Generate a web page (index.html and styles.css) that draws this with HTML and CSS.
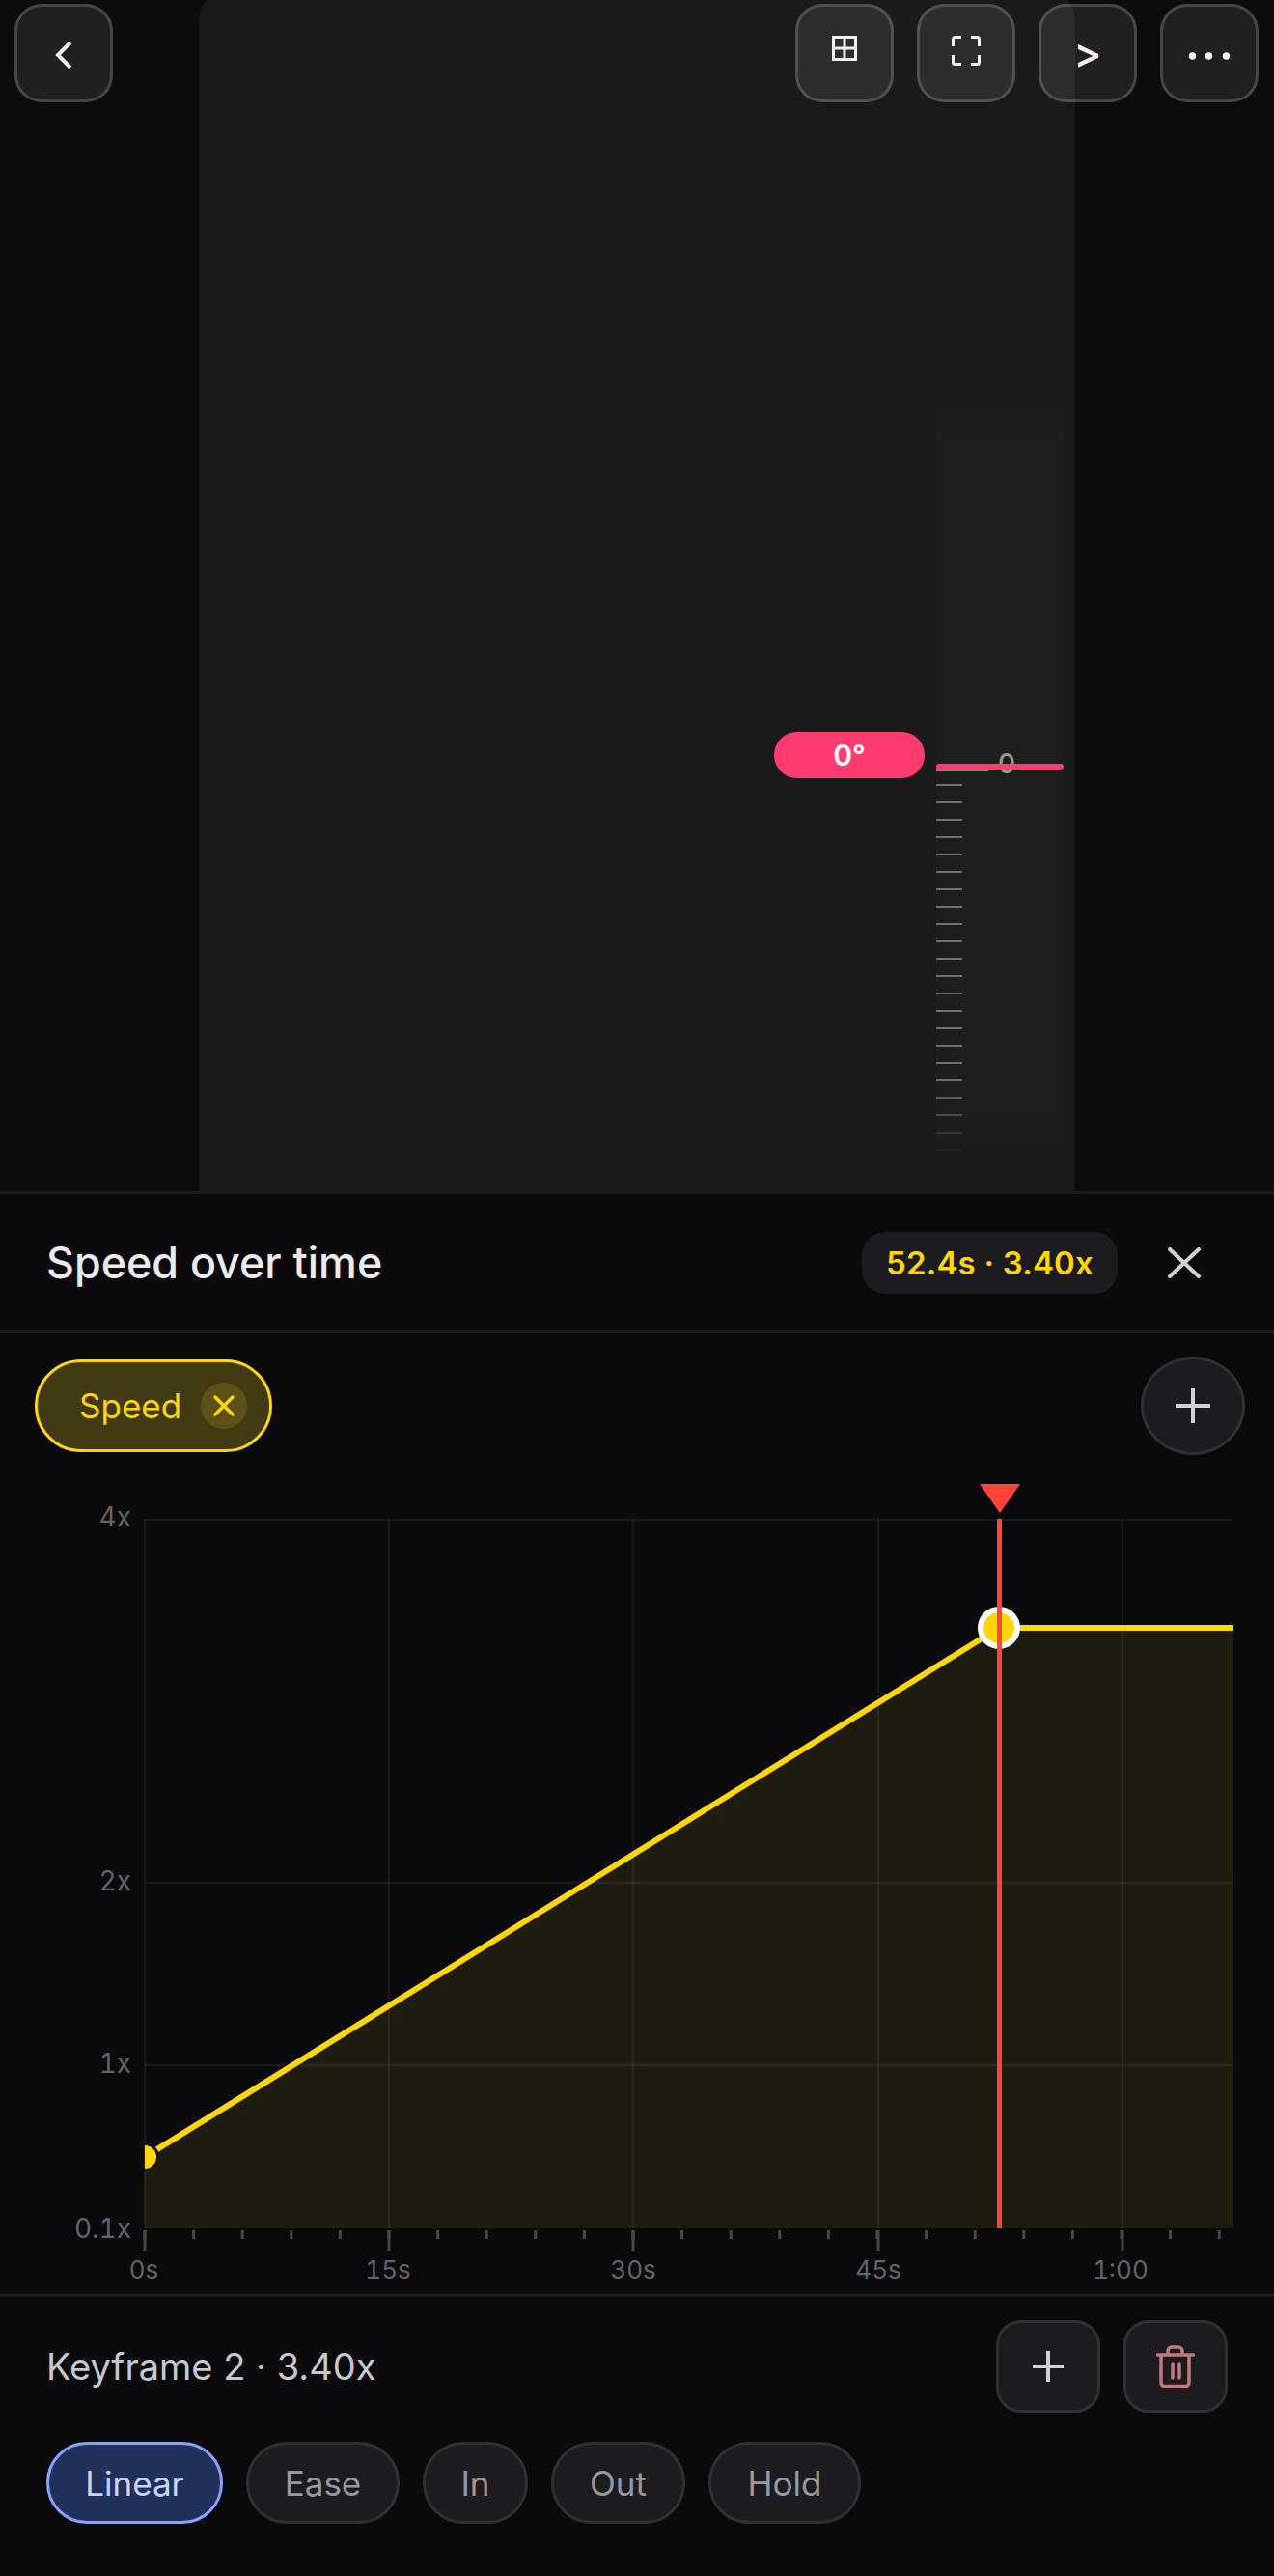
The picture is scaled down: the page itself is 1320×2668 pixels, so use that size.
FILE: index.html
```html
<!DOCTYPE html>
<html lang="en">
<head>
    <meta charset="UTF-8">
    <title>Speed over time</title>
    <link rel="stylesheet" href="styles.css">
</head>
<body>
    <section class="preview">
        <div class="canvas">
            <div class="ruler">
                <div class="rulerMajor"></div>
                <div class="rulerTicks"></div>
                <span class="rulerZero">0</span>
                <div class="rulerLine"></div>
                <div class="angleBadge">0°</div>
            </div>
        </div>
        <div class="topBar">
            <button class="topBtn">
                <svg width="20" height="36" viewBox="0 0 20 36"><path d="M17 7 4 20l13 13" class="topIcon"/></svg>
            </button>
            <div class="topGroup">
                <button class="topBtn">
                    <svg width="28" height="36" viewBox="0 0 28 36"><path d="M2.500 1.500h23v23h-23zM14 1.500v23M2.500 13h23" class="topIcon thin"/></svg>
                </button>
                <button class="topBtn">
                    <svg width="30" height="36" viewBox="0 0 30 36"><path d="M1.500 11V3.500a2 2 0 0 1 2-2H10M20 1.500h6.500a2 2 0 0 1 2 2V11M1.500 20v7.500a2 2 0 0 0 2 2H10M20 29.500h6.500a2 2 0 0 0 2-2V20" class="topIcon thin"/></svg>
                </button>
                <button class="topBtn"><span class="gtGlyph">&gt;</span></button>
                <button class="topBtn">
                    <svg width="44" height="16" viewBox="0 0 44 16"><circle cx="4.500" cy="11" r="3.700"/><circle cx="21.500" cy="11" r="3.700"/><circle cx="39.500" cy="11" r="3.700"/></svg>
                </button>
            </div>
        </div>
    </section>

    <header class="panelHead">
        <h1 class="panelTitle">Speed over time</h1>
        <div class="readout">52.4s · 3.40x</div>
        <svg class="closeIcon" width="34" height="32" viewBox="0 0 34 32"><path d="M2 2l30 28M32 2 2 30"/></svg>
    </header>

    <div class="chipRow">
        <div class="chip">
            <span>Speed</span>
            <span class="chipClose">
                <svg width="24" height="24" viewBox="0 0 24 24"><path d="M3 3l18 18M21 3 3 21"/></svg>
            </span>
        </div>
        <button class="addCircle">
            <svg width="36" height="36" viewBox="0 0 36 36"><path d="M18 1v34M1 18h34" class="plusIcon"/></svg>
        </button>
    </div>

    <svg class="chart" width="1320" height="869" viewBox="0 1507 1320 869">
        <defs>
            <clipPath id="plotClip"><rect x="150" y="1573" width="1128" height="735"/></clipPath>
        </defs>

        <!-- area under curve -->
        <path d="M150 2234 1035 1686H1278V2308H150z" class="area"/>

        <!-- grid -->
        <path d="M150 1574H1278M150 1950H1278M150 2139H1278" class="grid"/>
        <path d="M150 1573V2308M403 1573V2308M656 1573V2308M910 1573V2308M1163 1573V2308" class="grid"/>

        <!-- y labels -->
        <text x="136" y="1581" class="axisText endText">4x</text>
        <text x="136" y="1958" class="axisText endText">2x</text>
        <text x="136" y="2147" class="axisText endText">1x</text>
        <text x="136" y="2318" class="axisText endText">0.1x</text>

        <!-- time ticks -->
        <line x1="148.500" y1="2314.500" x2="1268" y2="2314.500" class="minorTicks"/>
        <path d="M150 2310V2331M403 2310V2331M656 2310V2331M910 2310V2331M1163 2310V2331" class="majorTicks"/>
        <text x="149" y="2360" class="axisText midText">0s</text>
        <text x="402" y="2360" class="axisText midText">15s</text>
        <text x="656" y="2360" class="axisText midText">30s</text>
        <text x="910" y="2360" class="axisText midText">45s</text>
        <text x="1161" y="2360" class="axisText midText">1:00</text>

        <!-- curve -->
        <g clip-path="url(#plotClip)">
            <path d="M150 2234 1035 1686H1278" class="curve"/>
            <circle cx="150" cy="2234" r="13.500" class="startDot"/>
        </g>
        <circle cx="1035" cy="1686" r="19" class="keyDot"/>

        <!-- playhead -->
        <path d="M1015 1537h42l-21 30z" class="playTri"/>
        <rect x="1033" y="1573" width="5" height="735" class="playLine"/>
    </svg>

    <section class="keyPanel">
        <div class="keyRow">
            <div class="keyLabel">Keyframe 2 · 3.40x</div>
            <div class="keyBtns">
                <button class="squareBtn">
                    <svg width="32" height="32" viewBox="0 0 32 32"><path d="M16 0v32M0 16h32" class="plusIcon"/></svg>
                </button>
                <button class="squareBtn">
                    <svg width="40" height="44" viewBox="0 0 40 44">
                        <path d="M1.500 10h37M12 10V6a4 4 0 0 1 4-4h7a4 4 0 0 1 4 4v4M5 10v29a3.500 3.500 0 0 0 3.500 3.500h22a3.500 3.500 0 0 0 3.500-3.500V10M17 19v15M24 19v15" class="trashIcon"/>
                    </svg>
                </button>
            </div>
        </div>
        <div class="easeRow">
            <button class="easeBtn easeLinear active">Linear</button>
            <button class="easeBtn easeEase">Ease</button>
            <button class="easeBtn easeIn">In</button>
            <button class="easeBtn easeOut">Out</button>
            <button class="easeBtn easeHold">Hold</button>
        </div>
    </section>
</body>
</html>
```

FILE: styles.css
```css
* {
    box-sizing: border-box;
}

body {
    margin: 0;
    height: 2668px;
    background-color: #0a0a0d;
    font-family: Inter, "Noto Sans", sans-serif;
    overflow: hidden;
}

button {
    font-family: inherit;
    padding: 0;
    cursor: pointer;
}

/* preview area */
.preview {
    position: relative;
    height: 1234px;
    background-color: #0c0c0c;
    overflow: hidden;
}

.canvas {
    position: relative;
    width: 908px;
    height: 1248px;
    margin: -14px auto 0;
    background-color: #1a1a1a;
    border-radius: 36px 36px 0 0;
}

.topBar {
    position: absolute;
    top: 4px;
    left: 15px;
    right: 16px;
    display: flex;
    justify-content: space-between;
}

.topGroup {
    display: flex;
    gap: 24px;
}

.topBtn {
    width: 102px;
    height: 102px;
    display: flex;
    align-items: center;
    justify-content: center;
    background-color: rgba(255, 255, 255, 0.085);
    border: 3px solid rgba(255, 255, 255, 0.17);
    border-radius: 28px;
    color: #f2f2f2;
}

.topBtn svg {
    fill: #f2f2f2;
}

.topIcon {
    fill: none;
    stroke: #f2f2f2;
    stroke-width: 4;
}

.topIcon.thin {
    stroke-width: 3;
}

.gtGlyph {
    font-size: 44px;
    font-weight: 500;
    line-height: 1;
    margin-top: -2px;
}

/* angle ruler */
.ruler {
    position: absolute;
    left: 764px;
    top: 419px;
    width: 132px;
    height: 800px;
    background: linear-gradient(rgba(255, 255, 255, 0), rgba(255, 255, 255, 0.02) 7.500%, rgba(255, 255, 255, 0.02) 92%, rgba(255, 255, 255, 0));
}

.rulerMajor {
    position: absolute;
    left: 0;
    top: 391px;
    width: 54px;
    height: 3px;
    background-color: #8a8a8a;
}

.rulerTicks {
    position: absolute;
    left: 0;
    top: 407px;
    width: 27px;
    height: 380px;
    background: repeating-linear-gradient(#707070 0 2px, transparent 2px 18px);
    -webkit-mask-image: linear-gradient(#000 80%, rgba(0, 0, 0, 0.55) 90%, rgba(0, 0, 0, 0.3) 95%, rgba(0, 0, 0, 0.1));
    mask-image: linear-gradient(#000 80%, rgba(0, 0, 0, 0.55) 90%, rgba(0, 0, 0, 0.3) 95%, rgba(0, 0, 0, 0.1));
}

.rulerZero {
    position: absolute;
    left: 64px;
    top: 370px;
    width: 18px;
    text-align: center;
    font-size: 28px;
    font-weight: 500;
    line-height: 32px;
    color: #9a9a9a;
}

.rulerLine {
    position: absolute;
    left: 0;
    top: 386px;
    width: 132px;
    height: 6px;
    background-color: #ff3b6f;
    border-radius: 3px;
}

.angleBadge {
    position: absolute;
    left: -168px;
    top: 353px;
    width: 156px;
    height: 48px;
    background-color: #ff3b6f;
    border-radius: 24px;
    color: #fff;
    font-size: 30px;
    font-weight: 600;
    line-height: 48px;
    text-align: center;
}

/* panel header */
.panelHead {
    height: 147px;
    display: flex;
    align-items: center;
    padding: 0 76px 0 48px;
    border-top: 3px solid #1c1c20;
    border-bottom: 3px solid #1c1c20;
}

.panelTitle {
    margin: 0 auto 0 0;
    font-size: 44.800px;
    font-weight: 500;
    color: #ebebf0;
}

.readout {
    width: 265px;
    height: 64px;
    background-color: #1c1c20;
    border-radius: 24px;
    color: #ffd60a;
    font-size: 33px;
    font-weight: 600;
    letter-spacing: 0.2px;
    line-height: 64px;
    text-align: center;
}

.closeIcon {
    margin-left: 52px;
    fill: none;
    stroke: #d1d1d6;
    stroke-width: 4;
    stroke-linecap: round;
}

/* track chips */
.chipRow {
    display: flex;
    justify-content: space-between;
    align-items: center;
    padding: 24px 30px 0 36px;
}

.chip {
    width: 246px;
    height: 96px;
    display: flex;
    align-items: center;
    justify-content: space-between;
    padding: 0 23px 0 43px;
    background-color: #413a13;
    border: 3px solid #ffd60a;
    border-radius: 48px;
    color: #ffd60a;
    font-size: 35px;
}

.chipClose {
    width: 48px;
    height: 48px;
    display: flex;
    align-items: center;
    justify-content: center;
    background-color: #5c5116;
    border-radius: 50%;
}

.chipClose svg {
    fill: none;
    stroke: #ffd60a;
    stroke-width: 3.500;
    stroke-linecap: round;
}

.addCircle {
    width: 108px;
    height: 102px;
    display: flex;
    align-items: center;
    justify-content: center;
    background-color: #1c1c20;
    border: 3px solid #2f2f34;
    border-radius: 50%;
}

.plusIcon {
    fill: none;
    stroke: #d1d1d6;
    stroke-width: 4;
    stroke-linecap: round;
}

/* chart */
.chart {
    display: block;
}

.area {
    fill: #1e1c10;
}

.grid {
    fill: none;
    stroke: rgba(255, 255, 255, 0.06);
    stroke-width: 2.500;
}

.axisText {
    font-size: 28px;
    font-variant-numeric: tabular-nums;
    fill: #636366;
}

.endText {
    text-anchor: end;
}

.midText {
    text-anchor: middle;
    font-size: 26px;
}

.minorTicks {
    stroke: #48484a;
    stroke-width: 9;
    stroke-dasharray: 3 47.6;
}

.majorTicks {
    fill: none;
    stroke: #48484a;
    stroke-width: 3;
}

.curve {
    fill: none;
    stroke: #ffd60a;
    stroke-width: 6;
}

.startDot {
    fill: #ffd60a;
    stroke: #141410;
    stroke-width: 3;
}

.keyDot {
    fill: #ffd60a;
    stroke: #fff;
    stroke-width: 6;
}

.playTri,
.playLine {
    fill: #ff453a;
}

/* keyframe panel */
.keyPanel {
    border-top: 3px solid #1c1c20;
    padding: 24px 48px 0 48px;
}

.keyRow {
    display: flex;
    justify-content: space-between;
    align-items: center;
}

.keyLabel {
    font-size: 38px;
    color: #c7c7cc;
}

.keyBtns {
    display: flex;
    gap: 24px;
}

.squareBtn {
    width: 108px;
    height: 96px;
    display: flex;
    align-items: center;
    justify-content: center;
    background-color: #1c1c20;
    border: 3px solid #2f2f34;
    border-radius: 26px;
}

.trashIcon {
    fill: none;
    stroke: #c47a7d;
    stroke-width: 3.500;
    stroke-linecap: round;
}

.easeRow {
    display: flex;
    gap: 24px;
    margin-top: 30px;
}

.easeBtn {
    height: 85px;
    background-color: #1c1c20;
    border: 3px solid #2f2f34;
    border-radius: 42px;
    color: #98989e;
    font-size: 35px;
}

.easeLinear {
    width: 183px;
}

.easeEase {
    width: 159px;
}

.easeIn {
    width: 109px;
}

.easeOut {
    width: 139px;
}

.easeHold {
    width: 158px;
}

.easeBtn.active {
    background-color: #22305c;
    border-color: #86a1ff;
    color: #c8d5ff;
}
```
